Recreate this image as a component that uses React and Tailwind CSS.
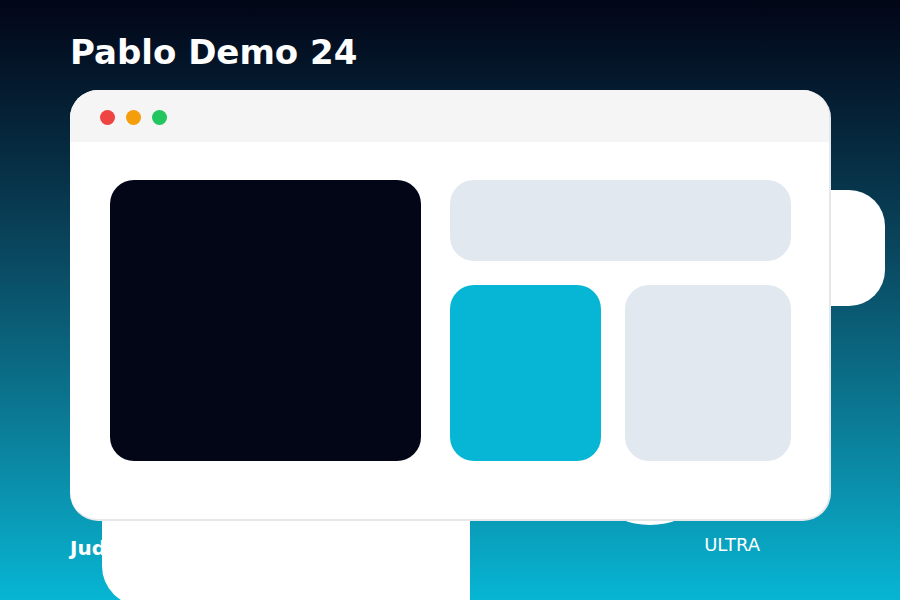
export default function App() {
  return (
    <div className="relative h-[600px] w-[900px] overflow-hidden bg-gradient-to-b from-[#020617] to-[#06b6d4] font-['DejaVu_Sans',sans-serif] text-white">
      <div className="px-[70px] pt-[32px]">
        <h1 className="text-[34px] leading-[40px] font-bold">Pablo Demo 24</h1>

        <div className="relative mt-[18px] h-[431px] w-[761px]">
          {/* shapes peeking out from behind the window */}
          <div className="absolute left-[700px] top-[100px] h-[116px] w-[115px] rounded-[36px] bg-white" />
          <div className="absolute left-[502px] top-[279px] h-[156px] w-[156px] rounded-full bg-white" />
          <div className="absolute left-[32px] top-[300px] h-[216px] w-[368px] rounded-bl-[40px] bg-white" />

          <div className="absolute inset-0 z-10 flex flex-col overflow-hidden rounded-[28px] border-r-2 border-b-2 border-[#e5e7eb] bg-white">
            <div className="flex h-[52px] shrink-0 items-center gap-[11px] bg-[#f5f5f5] px-[30px] pt-[2px]">
              <span className="h-[15px] w-[15px] rounded-full bg-[#ef4444]" />
              <span className="h-[15px] w-[15px] rounded-full bg-[#f59e0b]" />
              <span className="h-[15px] w-[15px] rounded-full bg-[#22c55e]" />
            </div>

            <div className="flex gap-[29px] pl-[40px] pt-[38px]">
              <div className="h-[281px] w-[311px] rounded-[24px] bg-[#020617]" />
              <div className="flex w-[341px] flex-col gap-[24px]">
                <div className="h-[81px] rounded-[24px] bg-[#e2e8f0]" />
                <div className="flex h-[176px] gap-[24px]">
                  <div className="w-[151px] rounded-[24px] bg-[#06b6d4]" />
                  <div className="w-[166px] rounded-[24px] bg-[#e2e8f0]" />
                </div>
              </div>
            </div>
          </div>
        </div>

        <div className="mt-[13px] flex items-start justify-between">
          <span className="pt-[2px] text-[20px] leading-[24px] font-bold">Judges</span>
          <span className="mr-[70px] text-[18px] leading-[22px]">ULTRA</span>
        </div>
      </div>
    </div>
  );
}
